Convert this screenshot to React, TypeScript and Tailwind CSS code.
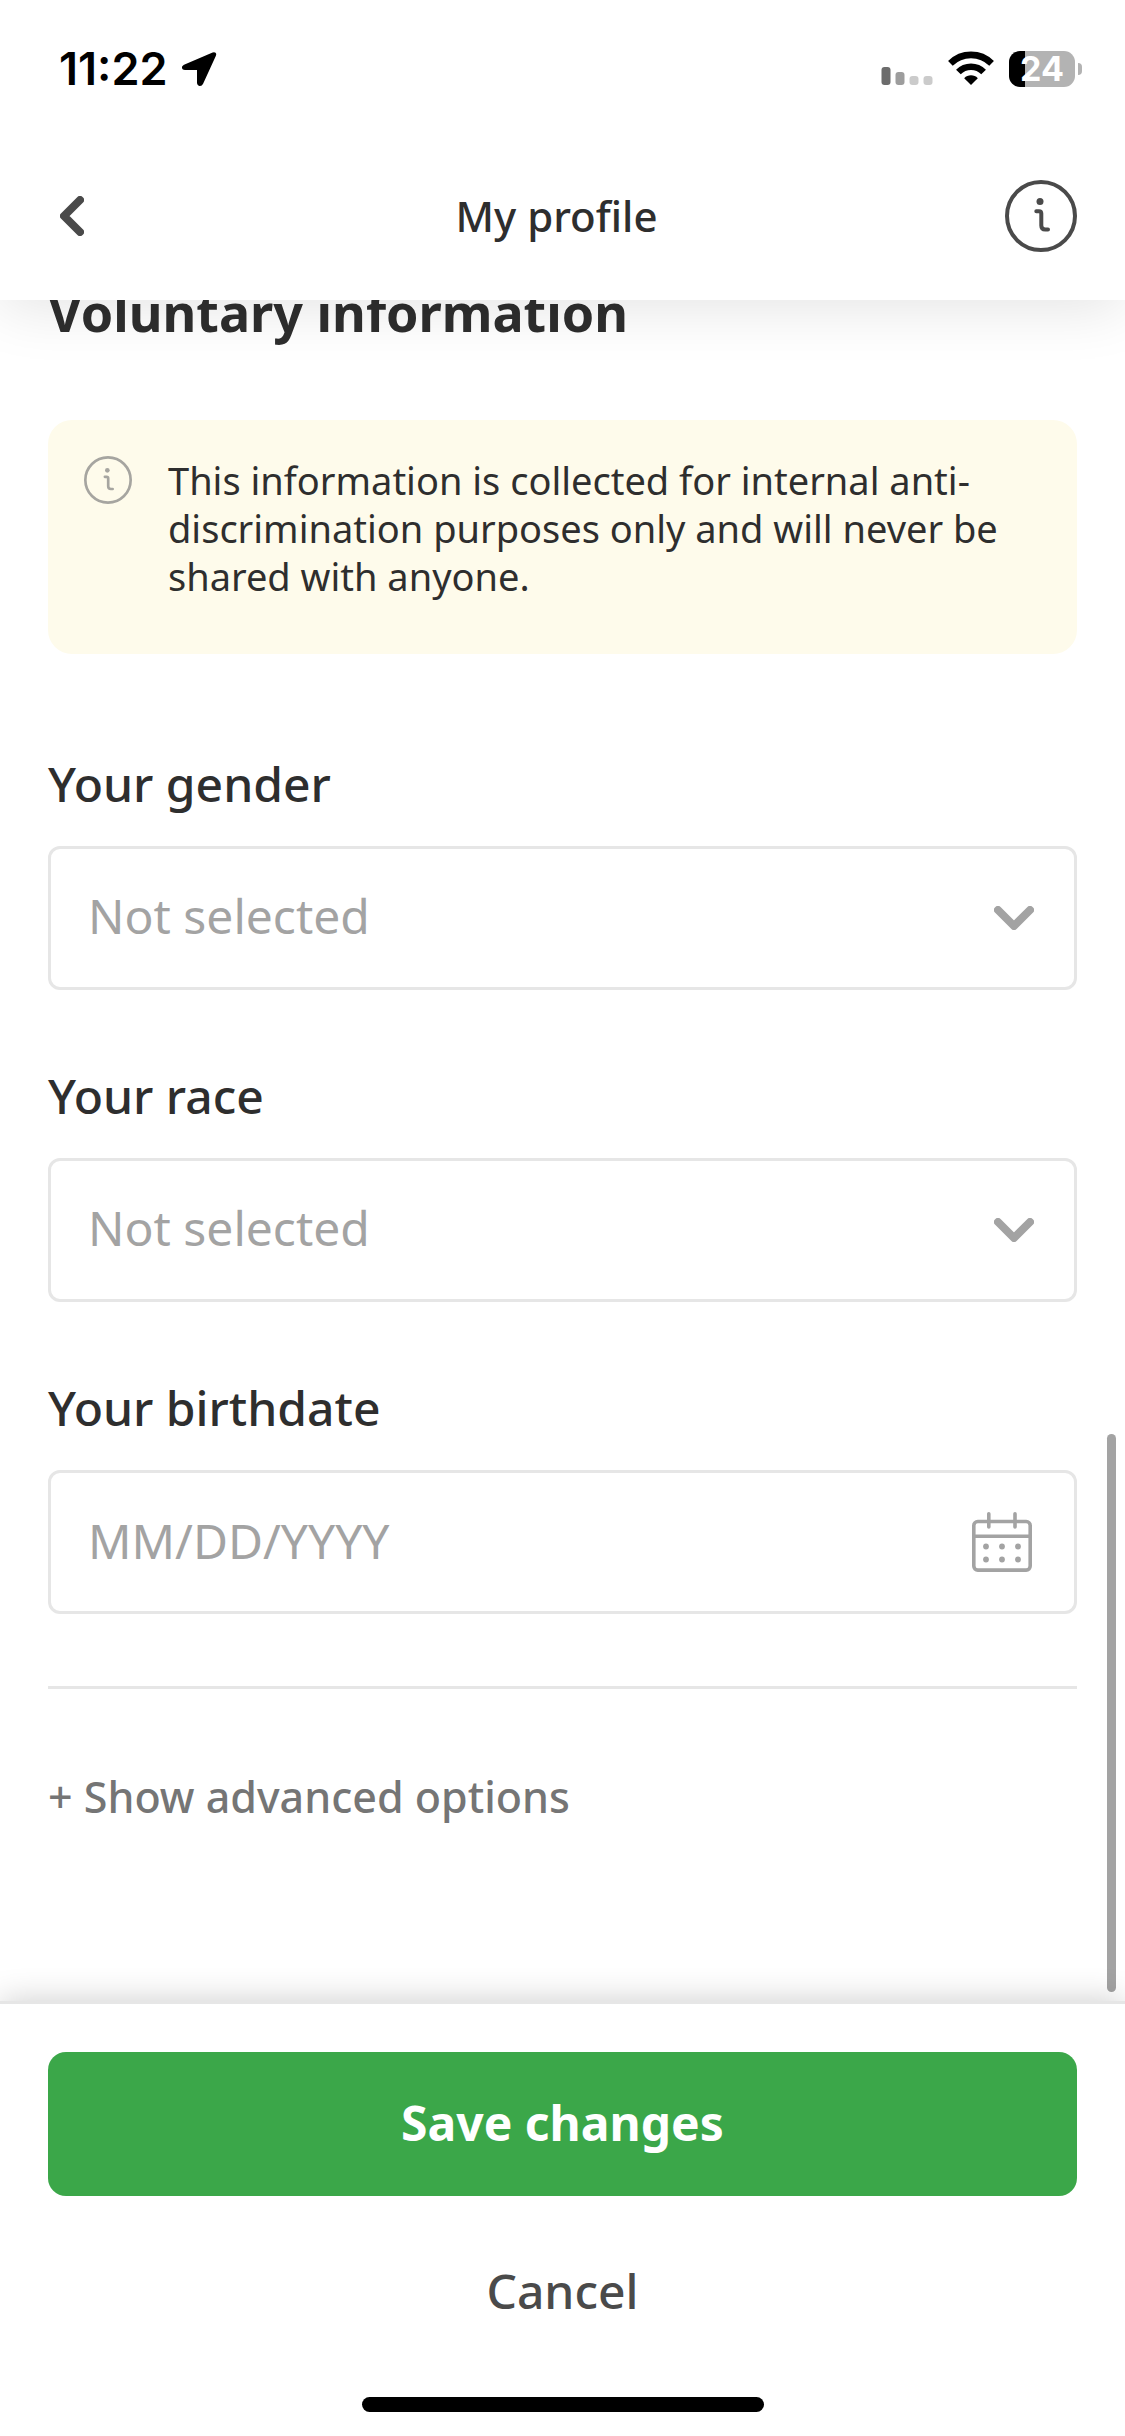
import { useState } from "react";

function LocationIcon() {
  return (
    <svg viewBox="0 0 36 36" className="size-9" aria-hidden="true">
      <path
        d="M32 2.5 3.4 14.6c-2.4 1.2-1.8 3.4 0.5 3.4H17v13.6c0 2.8 3 3.1 4.2 0.7L34 4.4c0.8-1.6-0.4-2.6-2-1.9Z"
        fill="#000"
        stroke="#000"
        strokeWidth="2"
        strokeLinejoin="round"
      />
    </svg>
  );
}

function SignalIcon() {
  return (
    <svg viewBox="0 0 52 36" className="h-9 w-[52px]" aria-hidden="true">
      <rect x="0.5" y="16" width="9" height="18" rx="3" fill="#6c6c6c" />
      <rect x="14.5" y="21" width="9" height="13" rx="3" fill="#9d9d9d" />
      <rect x="28.5" y="25" width="9" height="9" rx="3" fill="#cbcbcb" />
      <rect x="42.5" y="25" width="9" height="9" rx="3" fill="#cbcbcb" />
    </svg>
  );
}

function WifiIcon() {
  return (
    <svg viewBox="0 0 46 36" className="h-9 w-[46px]" aria-hidden="true">
      <g fill="none" stroke="#000" strokeWidth="6.6">
        <path d="M2.4 12.4a29.2 29.2 0 0 1 41.2 0" />
        <path d="M10.4 21a17.8 17.8 0 0 1 25.2 0" />
      </g>
      <path d="M23 34 16.2 27.2c3.6-3.8 10-3.8 13.6 0Z" fill="#000" />
    </svg>
  );
}

function Battery() {
  return (
    <div className="flex items-center gap-[3px]" role="img" aria-label="Battery 24 percent">
      <div className="flex h-9 w-[66px] items-center justify-center rounded-[11px] bg-[linear-gradient(90deg,#000_24%,#b3b3b3_24%)] font-[Inter,sans-serif] text-[34px] leading-9 font-bold text-white">
        24
      </div>
      <div className="h-3 w-1 rounded-r-full bg-[#b3b3b3]" />
    </div>
  );
}

function InfoIcon({ className }: { className: string }) {
  return (
    <svg viewBox="0 0 72 72" className={className} fill="none" stroke="currentColor" strokeWidth="4" strokeLinecap="round" strokeLinejoin="round" aria-hidden="true">
      <circle cx="36" cy="36" r="34" />
      <circle cx="35" cy="21.5" r="3.5" fill="currentColor" stroke="none" />
      <path d="M31.3 31.3h2.7q2.3 0 2.3 2.3V45.5q0 4 4 4h2.7" />
    </svg>
  );
}

function CalendarIcon() {
  return (
    <svg viewBox="0 0 60 60" className="size-[60px]" fill="none" stroke="#a3a3a3" strokeWidth="3.6" strokeLinecap="round" aria-hidden="true">
      <rect x="1.8" y="9.5" width="56.4" height="48.6" rx="4" />
      <path d="M2 24.2H58M16.8 1.8V15M43 1.8V15" />
      <g fill="#a3a3a3" stroke="none">
        <circle cx="14" cy="34.5" r="2.9" />
        <circle cx="30" cy="34.5" r="2.9" />
        <circle cx="46" cy="34.5" r="2.9" />
        <circle cx="14" cy="47.5" r="2.9" />
        <circle cx="30" cy="47.5" r="2.9" />
        <circle cx="46" cy="47.5" r="2.9" />
      </g>
    </svg>
  );
}

const fieldLabel = "mb-8 block text-[48px] leading-[60px] font-medium";

const fieldBox =
  "h-36 w-full rounded-xl border-[3px] border-[#e6e6e6] bg-white pl-[37px] pb-1 pr-28 text-[48px] text-[#a3a3a3] placeholder:text-[#a3a3a3] outline-none";

function SelectField({ id, label, options }: { id: string; label: string; options: string[] }) {
  return (
    <div>
      <label htmlFor={id} className={fieldLabel}>
        {label}
      </label>
      <div className="relative">
        <select id={id} className={`${fieldBox} appearance-none`}>
          <option>Not selected</option>
          {options.map((option) => (
            <option key={option}>{option}</option>
          ))}
        </select>
        <svg viewBox="0 0 40 24" className="pointer-events-none absolute inset-y-0 right-[43px] my-auto h-6 w-10" aria-hidden="true">
          <path d="M4 4 20 20 36 4" fill="none" stroke="#a3a3a3" strokeWidth="8" strokeLinecap="round" strokeLinejoin="round" />
        </svg>
      </div>
    </div>
  );
}

export default function App() {
  const [birthdate, setBirthdate] = useState("");

  return (
    <div className="flex h-screen flex-col bg-white font-['Noto_Sans',sans-serif] text-[#2e2e2e]">
      <header className="relative z-10 shrink-0 bg-white shadow-[0_8px_56px_rgba(0,0,0,0.11)]">
        <div className="flex items-center justify-between pt-[51px] pr-[43px] pb-[93px] pl-[59px]">
          <div className="flex items-center gap-3.5">
            <span className="font-[Inter,sans-serif] text-[45px] leading-9 font-semibold text-black">11:22</span>
            <LocationIcon />
          </div>
          <div className="flex items-center gap-[15px]">
            <SignalIcon />
            <WifiIcon />
            <Battery />
          </div>
        </div>
        <div className="grid grid-cols-[72px_1fr_72px] items-center pr-12 pb-12 pl-9">
          <button type="button" aria-label="Back" className="flex h-[72px] items-center justify-center">
            <svg viewBox="0 0 24 40" className="h-10 w-6" aria-hidden="true">
              <path d="M20 4 4 20 20 36" fill="none" stroke="#4a4a4a" strokeWidth="8" strokeLinecap="round" strokeLinejoin="round" />
            </svg>
          </button>
          <h1 className="text-center text-[42px] leading-[60px] font-medium">My profile</h1>
          <button type="button" aria-label="Information" className="text-[#4a4a4a]">
            <InfoIcon className="size-[72px]" />
          </button>
        </div>
      </header>

      <main className="relative flex-1 overflow-hidden px-12">
        <h2 className="-mt-5 text-[52px] leading-[64px] font-bold">Voluntary information</h2>

        <div className="mt-[76px] flex gap-9 rounded-3xl bg-[#fefbeb] pt-9 pr-12 pb-[54px] pl-9 text-[38px] leading-[48px]">
          <InfoIcon className="size-12 shrink-0 text-[#a6a5a0]" />
          <p>This information is collected for internal anti-discrimination purposes only and will never be shared with anyone.</p>
        </div>

        <form className="mt-[100px] flex flex-col gap-[76px]">
          <SelectField id="gender" label="Your gender" options={["Female", "Male", "Non-binary"]} />
          <SelectField id="race" label="Your race" options={["Prefer not to say"]} />
          <div>
            <label htmlFor="birthdate" className={fieldLabel}>
              Your birthdate
            </label>
            <div className="relative">
              <input id="birthdate" type="text" placeholder="MM/DD/YYYY" value={birthdate} onChange={(e) => setBirthdate(e.target.value)} className={fieldBox} />
              <button type="button" aria-label="Open calendar" className="absolute inset-y-0 right-[45px] my-auto size-[60px]">
                <CalendarIcon />
              </button>
            </div>
          </div>
        </form>

        <hr className="mt-[72px] border-t-[3px] border-[#e6e6e6]" />
        <button type="button" className="mt-[78px] block text-[43px] leading-[60px] font-medium text-[#757575]">
          + Show advanced options
        </button>

        <div className="absolute right-[9px] bottom-[9px] h-[558px] w-[9px] rounded-full bg-[#a3a3a3]" />
      </main>

      <footer className="relative z-10 flex shrink-0 flex-col border-t-[3px] border-[#e6e6e6] bg-white px-12 pt-12 pb-6 shadow-[0_0_32px_rgba(0,0,0,0.2)]">
        <button type="button" className="h-36 rounded-[18px] bg-[#3ba749] pb-0.5 text-[48px] font-bold text-white">
          Save changes
        </button>
        <button type="button" className="mt-6 h-36 pb-0.5 text-[48px] font-medium text-[#4a4a4a]">
          Cancel
        </button>
        <div className="mt-[33px] h-[15px] w-[402px] self-center rounded-full bg-black" />
      </footer>
    </div>
  );
}
